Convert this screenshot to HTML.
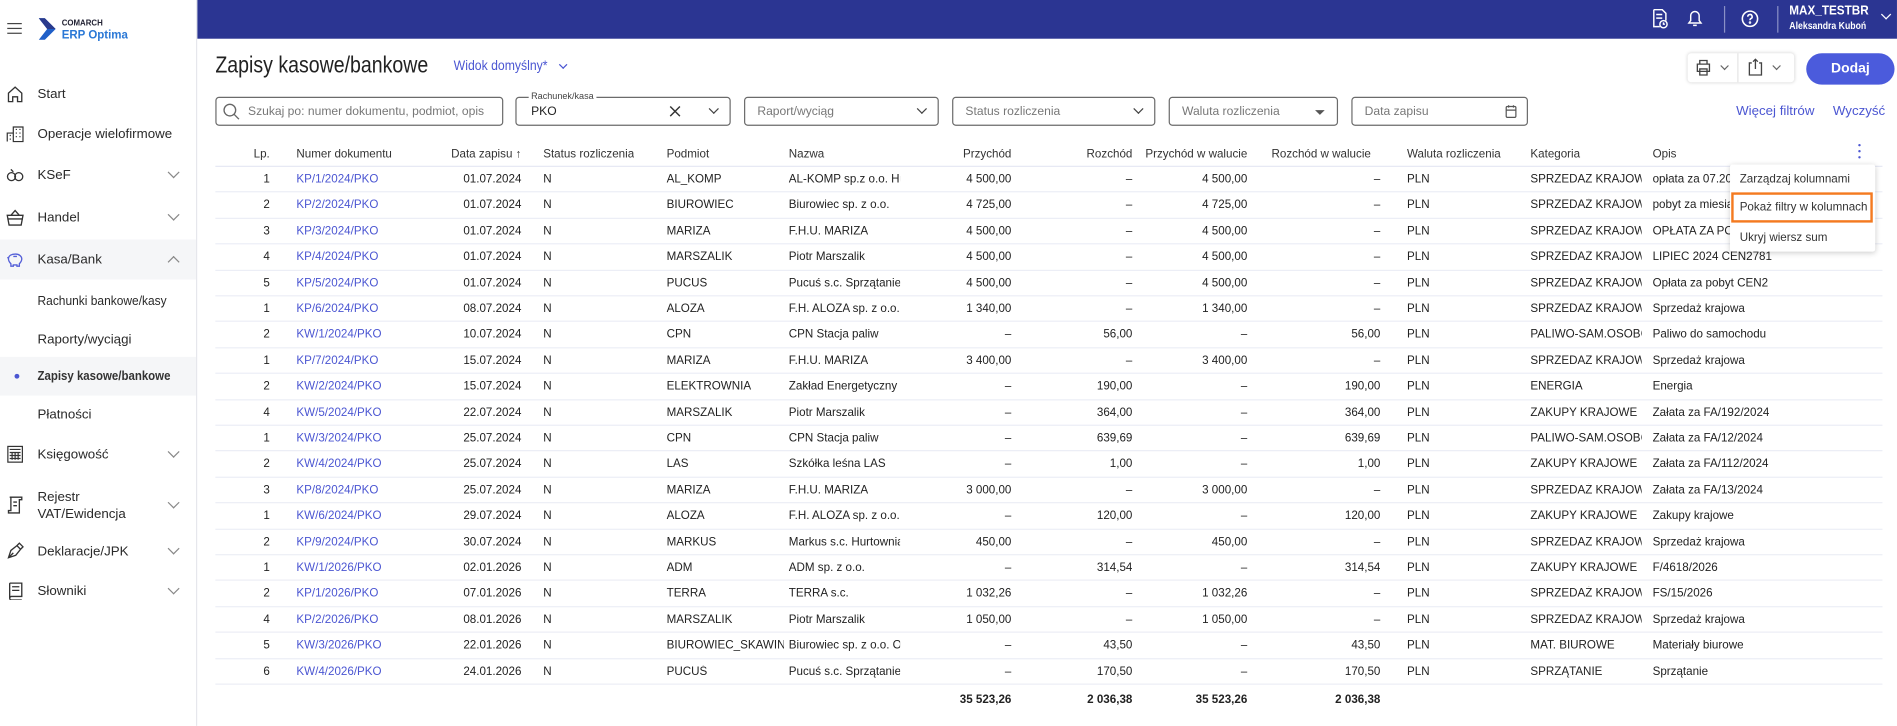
<!DOCTYPE html>
<html><head><meta charset="utf-8">
<style>
*{box-sizing:border-box;margin:0;padding:0}
html,body{width:1897px;height:725px;overflow:hidden;background:#fff}
#w{position:absolute;left:0;top:0;width:1568px;height:600px;transform:scale(1.2098);transform-origin:0 0;font-family:"Liberation Sans",sans-serif;color:#222;font-size:10px}
.a{position:absolute;white-space:nowrap}
#top{position:absolute;left:163px;top:0;width:1405px;height:32px;background:#2b3592}
#side{position:absolute;left:0;top:0;width:163px;height:600px;background:#fff;border-right:1px solid #e6e7ec}
.nav{position:absolute;left:0;width:162px;height:33px;font-size:11px;color:#2a2a2a}
.nav .t{position:absolute;left:31px;top:50%;transform:translateY(-50%);white-space:nowrap}
.nav .ch{position:absolute;left:140px;top:11px;width:7px;height:7px;border-right:1px solid #888;border-bottom:1px solid #888;transform:rotate(45deg)}
.nav .up{transform:rotate(-135deg);top:15px}
.ic{position:absolute;left:5px;top:9px;width:15px;height:15px}
.box{position:absolute;top:80px;height:24px;border:1px solid #6b6b6b;border-radius:3px;font-size:10px;color:#777}
.box span{position:absolute;left:10px;top:6px}
.dd{position:absolute;right:10px;top:6px;width:6px;height:6px;border-right:1.3px solid #444;border-bottom:1.3px solid #444;transform:rotate(45deg)}
.tri{position:absolute;right:10px;top:10px;border-left:4px solid transparent;border-right:4px solid transparent;border-top:4px solid #555}
.r{position:absolute;left:178px;width:1378px;height:21.4px;border-bottom:1px solid #eceef6;font-size:9.6px}
.r span{position:absolute;top:5px;white-space:nowrap;overflow:hidden}
.c1{left:0;width:45px;text-align:right}
.c2{left:67px;width:105px;color:#4b56d2}
.c3{left:177px;width:76px;text-align:right}
.c4{left:271px}
.c5{left:373px;width:97px}
.c6{left:474px;width:92px}
.c7{left:572px;width:86px;text-align:right}
.c8{left:672px;width:86px;text-align:right}
.c9{left:768px;width:85px;text-align:right}
.c10{left:867px;width:96px;text-align:right}
.c11{left:985px}
.c12{left:1087px;width:92px}
.c13{left:1188px;width:100px}
.h span{color:#333;font-weight:normal}
.h{border-bottom:1.5px solid #e6e8f3}
.fx{display:flex;justify-content:flex-end}
</style></head><body><div id="w">
<div id="top">
 <svg class="a" style="left:1202px;top:7px" width="14" height="17" viewBox="0 0 14 17" fill="none" stroke="#fff" stroke-width="1.2"><path d="M2 1h7l3 3v6M2 1v14h5M4 5h5M4 8h5"/><circle cx="10" cy="13" r="3"/><path d="M10 11.5v1.5h1.2"/></svg>
 <svg class="a" style="left:1231px;top:7px" width="14" height="16" viewBox="0 0 14 16" fill="none" stroke="#fff" stroke-width="1.2"><path d="M2 12h10l-1.5-2V6a3.5 3.5 0 0 0-7 0v4z M5.5 14h3"/></svg>
 <div class="a" style="left:1262px;top:5px;width:1px;height:22px;background:#8a90c6"></div>
 <svg class="a" style="left:1276px;top:8px" width="15" height="15" viewBox="0 0 15 15" fill="none" stroke="#fff" stroke-width="1.3"><circle cx="7.5" cy="7.5" r="6.3"/><path d="M5.7 5.8a1.8 1.8 0 1 1 2.5 1.6c-.6.3-.7.7-.7 1.3"/><circle cx="7.5" cy="10.6" r=".4"/></svg>
 <div class="a" style="left:1306px;top:5px;width:1px;height:22px;background:#8a90c6"></div>
 <div class="a" style="left:1316px;top:3px;color:#fff;font-weight:bold;font-size:11px;transform:scaleX(.88);transform-origin:0 0">MAX_TESTBR</div>
 <div class="a" style="left:1316px;top:17px;color:#fff;font-size:8px;font-weight:bold;transform:scaleX(.9);transform-origin:0 0">Aleksandra Kuboń</div>
 <div class="a" style="left:1393px;top:9px;width:6px;height:6px;border-right:1.3px solid #fff;border-bottom:1.3px solid #fff;transform:rotate(45deg)"></div>
</div>
<div id="side">
 <div class="a" style="left:6px;top:19px;width:12px;height:1.2px;background:#444;box-shadow:0 4px 0 #444,0 8px 0 #444"></div>
 <svg class="a" style="left:32px;top:15px" width="14" height="18" viewBox="0 0 14 18"><path d="M0 0h5l9 9-9 9H0l7-9z" fill="#1f5fc8"/><path d="M0 0h5l9 9H7z" fill="#2a3a8c"/></svg>
 <div class="a" style="left:51px;top:16px;font-size:6.5px;font-weight:bold;color:#223">COMARCH</div>
 <div class="a" style="left:51px;top:24px;font-size:9.5px;font-weight:bold;color:#2a78d6">ERP Optima</div>

 <div class="nav" style="top:61px"><svg class="ic" viewBox="0 0 15 15" fill="none" stroke="#333" stroke-width="1.1"><path d="M2 7l5.5-5 5.5 5v7H9.5v-4h-4v4H2z"/></svg><span class="t">Start</span></div>
 <div class="nav" style="top:94px"><svg class="ic" viewBox="0 0 15 15" fill="none" stroke="#333" stroke-width="1"><path d="M6 14V2h8v12zM1 14V7h5M8 4h1M11 4h1M8 7h1M11 7h1M8 10h1M11 10h1M3 9h1M3 12h1"/></svg><span class="t">Operacje wielofirmowe</span></div>
 <div class="nav" style="top:128px"><svg class="ic" viewBox="0 0 15 15" fill="none" stroke="#333" stroke-width="1.1"><circle cx="4.5" cy="9" r="3.3"/><circle cx="10.5" cy="9" r="3.3"/><path d="M4 3l2 2"/></svg><span class="t">KSeF</span><i class="ch"></i></div>
 <div class="nav" style="top:163px"><svg class="ic" viewBox="0 0 15 15" fill="none" stroke="#333" stroke-width="1.1"><path d="M1 6h13l-1.5 8h-10zM4 6l3.5-4 3.5 4M1 9h13"/></svg><span class="t">Handel</span><i class="ch"></i></div>
 <div class="nav" style="top:198px;background:#f5f6f8"><svg class="ic" viewBox="0 0 15 15" fill="none" stroke="#5560d8" stroke-width="1.1"><path d="M2 7c0-3 3-4 6-4 3 0 5 2 5 4 0 2-1 3-2 4v2H9v-1H6v1H4v-2C3 10 2 9 2 7zM1 6h1M6 5h3"/></svg><span class="t">Kasa/Bank</span><i class="ch up"></i></div>
 <div class="nav" style="top:232px"><span class="t" style="transform:translateY(-50%) scaleX(.9);transform-origin:0 50%">Rachunki bankowe/kasy</span></div>
 <div class="nav" style="top:264px"><span class="t">Raporty/wyciągi</span></div>
 <div class="nav" style="top:295px;height:32px;background:#f5f6f8"><div class="a" style="left:12px;top:14px;width:4px;height:4px;border-radius:50%;background:#4b56d2"></div><span class="t" style="font-weight:bold;color:#333;transform:translateY(-50%) scaleX(.86);transform-origin:0 50%">Zapisy kasowe/bankowe</span></div>
 <div class="nav" style="top:326px"><span class="t">Płatności</span></div>
 <div class="nav" style="top:359px"><svg class="ic" viewBox="0 0 15 15" fill="none" stroke="#333" stroke-width="1"><rect x="1.5" y="1" width="12" height="13"/><path d="M3 3.5h9M3 6h9M3 8.5h9M3 11h9M5 6v6M7.5 6v6M10 6v6"/></svg><span class="t">Księgowość</span><i class="ch"></i></div>
 <div class="nav" style="top:398px;height:40px"><svg class="ic" style="top:12px" viewBox="0 0 15 15" fill="none" stroke="#333" stroke-width="1.1"><path d="M3 1h10v2h-2v11H2v-2h2V1zM6 5h3M6 8h3"/></svg><span class="t" style="line-height:14px">Rejestr<br>VAT/Ewidencja</span><i class="ch" style="top:14px"></i></div>
 <div class="nav" style="top:439px"><svg class="ic" viewBox="0 0 15 15" fill="none" stroke="#333" stroke-width="1.1"><path d="M2 13l2-6 5-4 3 3-4 5zM2 13l4-4M9 3l2-2 3 3-2 2"/></svg><span class="t">Deklaracje/JPK</span><i class="ch"></i></div>
 <div class="nav" style="top:472px"><svg class="ic" viewBox="0 0 15 15" fill="none" stroke="#333" stroke-width="1.1"><path d="M3 1h10v11H4.5a1.5 1.5 0 0 0 0 3H13M3 1v12.5M5 4h6M5 7h6"/></svg><span class="t">Słowniki</span><i class="ch"></i></div>
</div>

<div class="a" style="left:178px;top:44px;font-size:19px;color:#222;transform:scaleX(.85);transform-origin:0 0">Zapisy kasowe/bankowe</div>
<div class="a" style="left:375px;top:49px;font-size:11.5px;color:#4b56d2;transform:scaleX(.88);transform-origin:0 0">Widok domyślny*</div>
<div class="a" style="left:463px;top:51px;width:5px;height:5px;border-right:1px solid #4b56d2;border-bottom:1px solid #4b56d2;transform:rotate(45deg)"></div>

<div class="a" style="left:1395px;top:44px;width:88px;height:24px;border-radius:3px;box-shadow:0 0 3px rgba(0,0,0,.18);background:#fff"></div>
<svg class="a" style="left:1401px;top:49px" width="14" height="14" viewBox="0 0 14 14" fill="none" stroke="#444" stroke-width="1.1"><path d="M4 4V1h6v3M2 4h10v6H2zM4 8h6v5H4zM5 10h4"/></svg>
<div class="a" style="left:1423px;top:52px;width:5px;height:5px;border-right:1px solid #666;border-bottom:1px solid #666;transform:rotate(45deg)"></div>
<div class="a" style="left:1436px;top:44px;width:1px;height:24px;background:#e5e5e5"></div>
<svg class="a" style="left:1444px;top:48px" width="14" height="15" viewBox="0 0 14 15" fill="none" stroke="#444" stroke-width="1.1"><path d="M4 4H2v10h10V4h-2M7 1v8M5 3l2-2 2 2"/></svg>
<div class="a" style="left:1466px;top:52px;width:5px;height:5px;border-right:1px solid #666;border-bottom:1px solid #666;transform:rotate(45deg)"></div>
<div class="a" style="left:1493px;top:44px;width:73px;height:26px;border-radius:13px;background:#4b5bdc;color:#fff;font-size:11.5px;font-weight:bold;text-align:center;line-height:26px">Dodaj</div>

<div class="box" style="left:178px;width:238px"><svg class="a" style="left:5px;top:4px" width="14" height="14" viewBox="0 0 14 14" fill="none" stroke="#666" stroke-width="1.1"><circle cx="6" cy="6" r="4.8"/><path d="M9.5 9.5l4 4"/></svg><span style="left:26px">Szukaj po: numer dokumentu, podmiot, opis</span></div>
<div class="box" style="left:426px;width:178px"><div class="a" style="left:10px;top:-6px;background:#fff;padding:0 2px;font-size:7.5px;color:#444">Rachunek/kasa</div><span style="color:#222;left:12px">PKO</span><svg class="a" style="left:126px;top:6px" width="10" height="10" viewBox="0 0 10 10" stroke="#333" stroke-width="1.2"><path d="M1 1l8 8M9 1l-8 8"/></svg><i class="dd"></i></div>
<div class="box" style="left:615px;width:161px"><span>Raport/wyciąg</span><i class="dd"></i></div>
<div class="box" style="left:787px;width:168px"><span>Status rozliczenia</span><i class="dd"></i></div>
<div class="box" style="left:966px;width:140px"><span>Waluta rozliczenia</span><i class="tri"></i></div>
<div class="box" style="left:1117px;width:146px"><span>Data zapisu</span><svg class="a" style="left:126px;top:5px" width="10" height="12" viewBox="0 0 10 12" fill="none" stroke="#555" stroke-width="1"><rect x="1" y="2" width="8" height="9" rx="1"/><path d="M1 5h8M3 1v2M7 1v2"/></svg></div>
<div class="a" style="left:1435px;top:86px;font-size:11px;color:#4b56d2">Więcej filtrów</div>
<div class="a" style="left:1515px;top:86px;font-size:11px;color:#4b56d2">Wyczyść</div>

<div class="r h" style="top:117px"><span class="c1">Lp.</span><span class="c2" style="color:#333">Numer dokumentu</span><span class="c3" style="width:80px;left:173px">Data zapisu ↑</span><span class="c4">Status rozliczenia</span><span class="c5">Podmiot</span><span class="c6">Nazwa</span><span class="c7">Przychód</span><span class="c8">Rozchód</span><span class="c9 fx">Przychód w walucie</span><span class="c10" style="left:873px;text-align:left">Rozchód w walucie</span><span class="c11">Waluta rozliczenia</span><span class="c12">Kategoria</span><span class="c13">Opis</span></div>
<div class="a" style="left:1536px;top:119px;width:2px;height:2px;background:#4b56d2;box-shadow:0 5px 0 #4b56d2,0 10px 0 #4b56d2;border-radius:1px"></div>

<div class="r" style="top:138px"><span class="c1">1</span><span class="c2">KP/1/2024/PKO</span><span class="c3">01.07.2024</span><span class="c4">N</span><span class="c5">AL_KOMP</span><span class="c6">AL-KOMP sp.z o.o. Hu</span><span class="c7">4 500,00</span><span class="c8">–</span><span class="c9">4 500,00</span><span class="c10">–</span><span class="c11">PLN</span><span class="c12">SPRZEDAŻ KRAJOWA</span><span class="c13">opłata za 07.2024</span></div>
<div class="r" style="top:159.4px"><span class="c1">2</span><span class="c2">KP/2/2024/PKO</span><span class="c3">01.07.2024</span><span class="c4">N</span><span class="c5">BIUROWIEC</span><span class="c6">Biurowiec sp. z o.o.</span><span class="c7">4 725,00</span><span class="c8">–</span><span class="c9">4 725,00</span><span class="c10">–</span><span class="c11">PLN</span><span class="c12">SPRZEDAŻ KRAJOWA</span><span class="c13">pobyt za miesiąc</span></div>
<div class="r" style="top:180.8px"><span class="c1">3</span><span class="c2">KP/3/2024/PKO</span><span class="c3">01.07.2024</span><span class="c4">N</span><span class="c5">MARIZA</span><span class="c6">F.H.U. MARIZA</span><span class="c7">4 500,00</span><span class="c8">–</span><span class="c9">4 500,00</span><span class="c10">–</span><span class="c11">PLN</span><span class="c12">SPRZEDAŻ KRAJOWA</span><span class="c13">OPŁATA ZA POBYT</span></div>
<div class="r" style="top:202.2px"><span class="c1">4</span><span class="c2">KP/4/2024/PKO</span><span class="c3">01.07.2024</span><span class="c4">N</span><span class="c5">MARSZALIK</span><span class="c6">Piotr Marszalik</span><span class="c7">4 500,00</span><span class="c8">–</span><span class="c9">4 500,00</span><span class="c10">–</span><span class="c11">PLN</span><span class="c12">SPRZEDAŻ KRAJOWA</span><span class="c13">LIPIEC 2024 CEN2781</span></div>
<div class="r" style="top:223.6px"><span class="c1">5</span><span class="c2">KP/5/2024/PKO</span><span class="c3">01.07.2024</span><span class="c4">N</span><span class="c5">PUCUŚ</span><span class="c6">Pucuś s.c. Sprzątanie</span><span class="c7">4 500,00</span><span class="c8">–</span><span class="c9">4 500,00</span><span class="c10">–</span><span class="c11">PLN</span><span class="c12">SPRZEDAŻ KRAJOWA</span><span class="c13">Opłata za pobyt CEN2</span></div>
<div class="r" style="top:245px"><span class="c1">1</span><span class="c2">KP/6/2024/PKO</span><span class="c3">08.07.2024</span><span class="c4">N</span><span class="c5">ALOZA</span><span class="c6">F.H. ALOZA sp. z o.o.</span><span class="c7">1 340,00</span><span class="c8">–</span><span class="c9">1 340,00</span><span class="c10">–</span><span class="c11">PLN</span><span class="c12">SPRZEDAŻ KRAJOWA</span><span class="c13">Sprzedaż krajowa</span></div>
<div class="r" style="top:266.4px"><span class="c1">2</span><span class="c2">KW/1/2024/PKO</span><span class="c3">10.07.2024</span><span class="c4">N</span><span class="c5">CPN</span><span class="c6">CPN Stacja paliw</span><span class="c7">–</span><span class="c8">56,00</span><span class="c9">–</span><span class="c10">56,00</span><span class="c11">PLN</span><span class="c12">PALIWO-SAM.OSOBOWE</span><span class="c13">Paliwo do samochodu</span></div>
<div class="r" style="top:287.8px"><span class="c1">1</span><span class="c2">KP/7/2024/PKO</span><span class="c3">15.07.2024</span><span class="c4">N</span><span class="c5">MARIZA</span><span class="c6">F.H.U. MARIZA</span><span class="c7">3 400,00</span><span class="c8">–</span><span class="c9">3 400,00</span><span class="c10">–</span><span class="c11">PLN</span><span class="c12">SPRZEDAŻ KRAJOWA</span><span class="c13">Sprzedaż krajowa</span></div>
<div class="r" style="top:309.2px"><span class="c1">2</span><span class="c2">KW/2/2024/PKO</span><span class="c3">15.07.2024</span><span class="c4">N</span><span class="c5">ELEKTROWNIA</span><span class="c6">Zakład Energetyczny c</span><span class="c7">–</span><span class="c8">190,00</span><span class="c9">–</span><span class="c10">190,00</span><span class="c11">PLN</span><span class="c12">ENERGIA</span><span class="c13">Energia</span></div>
<div class="r" style="top:330.6px"><span class="c1">4</span><span class="c2">KW/5/2024/PKO</span><span class="c3">22.07.2024</span><span class="c4">N</span><span class="c5">MARSZALIK</span><span class="c6">Piotr Marszalik</span><span class="c7">–</span><span class="c8">364,00</span><span class="c9">–</span><span class="c10">364,00</span><span class="c11">PLN</span><span class="c12">ZAKUPY KRAJOWE</span><span class="c13">Załata za FA/192/2024</span></div>
<div class="r" style="top:352px"><span class="c1">1</span><span class="c2">KW/3/2024/PKO</span><span class="c3">25.07.2024</span><span class="c4">N</span><span class="c5">CPN</span><span class="c6">CPN Stacja paliw</span><span class="c7">–</span><span class="c8">639,69</span><span class="c9">–</span><span class="c10">639,69</span><span class="c11">PLN</span><span class="c12">PALIWO-SAM.OSOBOWE</span><span class="c13">Załata za FA/12/2024</span></div>
<div class="r" style="top:373.4px"><span class="c1">2</span><span class="c2">KW/4/2024/PKO</span><span class="c3">25.07.2024</span><span class="c4">N</span><span class="c5">LAS</span><span class="c6">Szkółka leśna LAS</span><span class="c7">–</span><span class="c8">1,00</span><span class="c9">–</span><span class="c10">1,00</span><span class="c11">PLN</span><span class="c12">ZAKUPY KRAJOWE</span><span class="c13">Załata za FA/112/2024</span></div>
<div class="r" style="top:394.8px"><span class="c1">3</span><span class="c2">KP/8/2024/PKO</span><span class="c3">25.07.2024</span><span class="c4">N</span><span class="c5">MARIZA</span><span class="c6">F.H.U. MARIZA</span><span class="c7">3 000,00</span><span class="c8">–</span><span class="c9">3 000,00</span><span class="c10">–</span><span class="c11">PLN</span><span class="c12">SPRZEDAŻ KRAJOWA</span><span class="c13">Załata za FA/13/2024</span></div>
<div class="r" style="top:416.2px"><span class="c1">1</span><span class="c2">KW/6/2024/PKO</span><span class="c3">29.07.2024</span><span class="c4">N</span><span class="c5">ALOZA</span><span class="c6">F.H. ALOZA sp. z o.o.</span><span class="c7">–</span><span class="c8">120,00</span><span class="c9">–</span><span class="c10">120,00</span><span class="c11">PLN</span><span class="c12">ZAKUPY KRAJOWE</span><span class="c13">Zakupy krajowe</span></div>
<div class="r" style="top:437.6px"><span class="c1">2</span><span class="c2">KP/9/2024/PKO</span><span class="c3">30.07.2024</span><span class="c4">N</span><span class="c5">MARKUS</span><span class="c6">Markus s.c. Hurtownia</span><span class="c7">450,00</span><span class="c8">–</span><span class="c9">450,00</span><span class="c10">–</span><span class="c11">PLN</span><span class="c12">SPRZEDAŻ KRAJOWA</span><span class="c13">Sprzedaż krajowa</span></div>
<div class="r" style="top:459px"><span class="c1">1</span><span class="c2">KW/1/2026/PKO</span><span class="c3">02.01.2026</span><span class="c4">N</span><span class="c5">ADM</span><span class="c6">ADM sp. z o.o.</span><span class="c7">–</span><span class="c8">314,54</span><span class="c9">–</span><span class="c10">314,54</span><span class="c11">PLN</span><span class="c12">ZAKUPY KRAJOWE</span><span class="c13">F/4618/2026</span></div>
<div class="r" style="top:480.4px"><span class="c1">2</span><span class="c2">KP/1/2026/PKO</span><span class="c3">07.01.2026</span><span class="c4">N</span><span class="c5">TERRA</span><span class="c6">TERRA s.c.</span><span class="c7">1 032,26</span><span class="c8">–</span><span class="c9">1 032,26</span><span class="c10">–</span><span class="c11">PLN</span><span class="c12">SPRZEDAŻ KRAJOWA</span><span class="c13">FS/15/2026</span></div>
<div class="r" style="top:501.8px"><span class="c1">4</span><span class="c2">KP/2/2026/PKO</span><span class="c3">08.01.2026</span><span class="c4">N</span><span class="c5">MARSZALIK</span><span class="c6">Piotr Marszalik</span><span class="c7">1 050,00</span><span class="c8">–</span><span class="c9">1 050,00</span><span class="c10">–</span><span class="c11">PLN</span><span class="c12">SPRZEDAŻ KRAJOWA</span><span class="c13">Sprzedaż krajowa</span></div>
<div class="r" style="top:523.2px"><span class="c1">5</span><span class="c2">KW/3/2026/PKO</span><span class="c3">22.01.2026</span><span class="c4">N</span><span class="c5">BIUROWIEC_SKAWINA</span><span class="c6">Biurowiec sp. z o.o. Od</span><span class="c7">–</span><span class="c8">43,50</span><span class="c9">–</span><span class="c10">43,50</span><span class="c11">PLN</span><span class="c12">MAT. BIUROWE</span><span class="c13">Materiały biurowe</span></div>
<div class="r" style="top:544.6px"><span class="c1">6</span><span class="c2">KW/4/2026/PKO</span><span class="c3">24.01.2026</span><span class="c4">N</span><span class="c5">PUCUŚ</span><span class="c6">Pucuś s.c. Sprzątanie</span><span class="c7">–</span><span class="c8">170,50</span><span class="c9">–</span><span class="c10">170,50</span><span class="c11">PLN</span><span class="c12">SPRZĄTANIE</span><span class="c13">Sprzątanie</span></div>
<div class="r" style="top:568px;border:none;font-weight:bold"><span class="c7">35 523,26</span><span class="c8">2 036,38</span><span class="c9">35 523,26</span><span class="c10">2 036,38</span></div>

<div class="a" style="left:1430px;top:136px;width:120px;height:72px;background:#fff;box-shadow:0 1px 5px rgba(0,0,0,.2);border-radius:2px;font-size:9.6px;color:#333">
 <div class="a" style="left:8px;top:7px">Zarządzaj kolumnami</div>
 <div class="a" style="left:1px;top:23px;width:117px;height:25px;border:2.5px solid #f47a20"></div>
 <div class="a" style="left:8px;top:30px">Pokaż filtry w kolumnach</div>
 <div class="a" style="left:8px;top:55px">Ukryj wiersz sum</div>
</div>
</div></body></html>
